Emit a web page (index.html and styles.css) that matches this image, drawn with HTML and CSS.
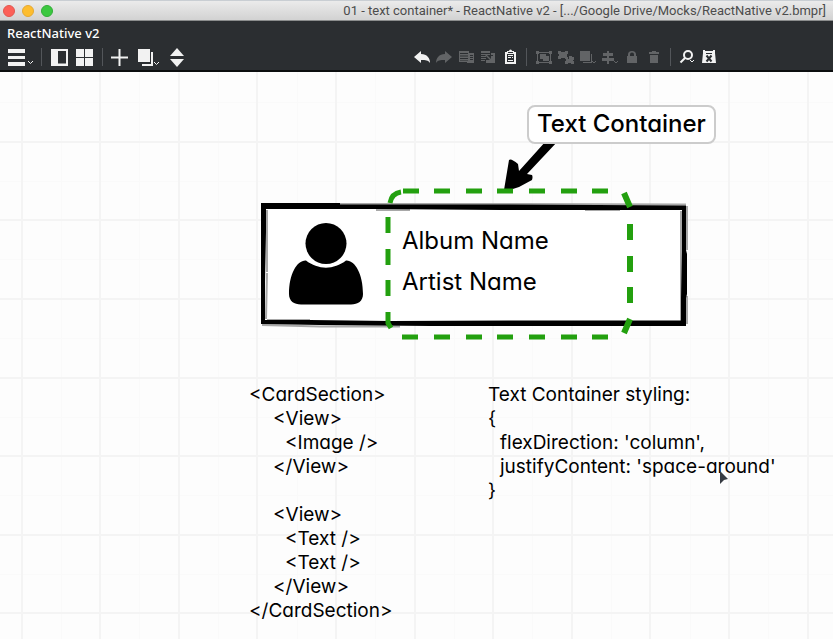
FILE: index.html
```html
<!DOCTYPE html>
<html lang="en">
<head>
<meta charset="utf-8">
<title>01 - text container* - ReactNative v2</title>
<link rel="stylesheet" href="styles.css">
</head>
<body>
<div class="window">
  <header class="titlebar">
    <div class="lights">
      <button class="light close" aria-label="Close"></button>
      <button class="light minimise" aria-label="Minimise"></button>
      <button class="light expand" aria-label="Full screen"></button>
    </div>
    <div class="title">01 - text container* - ReactNative v2 - [.../Google Drive/Mocks/ReactNative v2.bmpr]</div>
  </header>

  <div class="appbar">
    <h1 class="project">ReactNative v2</h1>
    <div class="toolbar">
      <div class="tools start">
        <button class="tool large" aria-label="Menu"><svg width="30" height="20"><path d="M2 1h17v4H2zM2 8h17v3H2zM2 14h17v4H2z"/><path class="line" d="M22 13l2.5 2.5 2.5-2.5"/></svg></button>
        <span class="rule"></span>
        <button class="tool medium" aria-label="Toggle navigator"><svg width="25" height="20"><path fill-rule="evenodd" d="M4 1h17v17H4zM11 3v12.500h8V3z"/></svg></button>
        <button class="tool medium" aria-label="Show all mockups"><svg width="25" height="20"><path d="M4 1h8v8H4zM13 1h8v8h-8zM4 10h8v8H4zM13 10h8v8h-8z"/></svg></button>
        <span class="rule"></span>
        <button class="tool medium" aria-label="New mockup"><svg width="25" height="20"><path d="M3 8.500h7.500V1h2v7.500H20v2h-7.500V18h-2v-7.500H3z"/></svg></button>
        <button class="tool large" aria-label="Duplicate"><svg width="30" height="20"><path d="M5 1h12v13H5zM18 4h2v14H9v-2h9z"/><path class="line" d="M21 14l2.500 2.500 2.500-2.500"/></svg></button>
        <button class="tool large" aria-label="Previous or next"><svg width="30" height="20"><path d="M14 0l7 8H7zM7 11h14l-7 8z"/></svg></button>
      </div>
      <div class="tools edit">
        <button class="tool" aria-label="Undo"><svg width="22" height="20"><path d="M3 9l7-6v3c6 0 9 4 9 9-2-3-4-3-9-3v3z"/></svg></button>
        <button class="tool" aria-label="Redo" disabled><svg width="22" height="20"><path d="M19 9l-7-6v3c-6 0-9 4-9 9 2-3 4-3 9-3v3z"/></svg></button>
        <button class="tool" aria-label="Copy" disabled><svg width="22" height="20"><path fill-rule="evenodd" d="M4 3h10v11H4zM5 5v1h8V5zM5 7.500v1h8v-1zM5 10v1h8v-1zM5 12.500v.5h8v-.5zM14 5h5v10h-7v-1h2zM15 7v1h3V7zM15 9v1h3V9zM15 11v1h3v-1z"/></svg></button>
        <button class="tool" aria-label="Duplicate selection" disabled><svg width="22" height="20"><path d="M4 3h9v2H4zM4 6h9v1H4zM4 8h5v1H4zM4 10h5v1H4zM4 12h4v1H4zM14 5h4v10H9v-2h7V7h-2z"/><path d="M9 6l5 5V8h2v6H9v-2h4L8 7z"/></svg></button>
        <button class="tool" aria-label="Paste"><svg width="22" height="20"><path fill-rule="evenodd" d="M6 4h2V3h2a1.500 1.500 0 0 1 3 0h2v1h2v12H6zM8 6v8h7V6zM9 4v1h5V4z"/><path d="M9 7h5v1H9zM9 9h3v1H9zM9 12h5v1H9zM13 9h1v1h-1z"/></svg></button>
        <span class="rule"></span>
        <button class="tool" aria-label="Group" disabled><svg width="22" height="20"><path class="line" d="M4.500 4.500h13v10h-13z"/><path d="M3 3h3v3H3zM16 3h3v3h-3zM3 13h3v3H3zM16 13h3v3h-3zM7 6h6v2h3v5h-6v-2H7z"/></svg></button>
        <button class="tool" aria-label="Ungroup" disabled><svg width="22" height="20"><path d="M3 3h3v1h4V3h3v3h-1v3h1v2h-3v-1H6v1H3V8h1V6H3zM11 11h3V8h3v1h2v3h-1v1h1v3h-3v-1h-3v1h-3v-3h1z"/></svg></button>
        <button class="tool" aria-label="Arrange" disabled><svg width="22" height="20"><path d="M3 3h10v10H3zM14 6h1v9H6v-1h8z"/><path class="line" d="M15 13l2 2 2-2"/></svg></button>
        <button class="tool" aria-label="Align" disabled><svg width="22" height="20"><path d="M8 3h2v2h4v3h-4v2h5v3h-5v3H8v-3H3v-3h5V8H4V5h4z"/><path class="line" d="M15 13l2 2 2-2"/></svg></button>
        <button class="tool" aria-label="Lock" disabled><svg width="22" height="20"><path fill-rule="evenodd" d="M7 8V6.500a4 3.500 0 0 1 8 0V8h1v7H6V8zM9 8h4V6.500a2 2 0 0 0-4 0z"/></svg></button>
        <button class="tool" aria-label="Delete" disabled><svg width="22" height="20"><path d="M6 4h3V3h4v1h3v2H6zM7 7h8v8H7z"/></svg></button>
        <span class="rule"></span>
        <button class="tool" aria-label="Zoom"><svg width="22" height="20"><circle class="thick" cx="11" cy="7" r="4"/><path class="thick" d="M8 10l-4.500 4.500"/><path class="line" d="M13 12l2 2 2-2"/></svg></button>
        <button class="tool" aria-label="Hide markup"><svg width="22" height="20"><path fill-rule="evenodd" d="M4 2h2v1h8V2h2v3l1 10H3L4 5zM7 5v1h6V5z"/><path class="cut" d="M7.500 7.500l5 6M12.500 7.500l-5 6"/></svg></button>
      </div>
    </div>
  </div>

  <main class="canvas">
    <svg class="drawing" width="1440" height="900" aria-hidden="true">
      <path class="grid minor" d="M61.500 0V900M139.500 0V900M218.500 0V900M297.500 0V900M375.500 0V900M454.500 0V900M532.500 0V900M611.500 0V900M690.500 0V900M768.500 0V900M0 30.500H1440M0 109.500H1440M0 187.500H1440M0 266.500H1440M0 345.500H1440M0 423.500H1440M0 502.500H1440"/>
      <path class="grid" d="M22 0V900M100 0V900M179 0V900M257 0V900M336 0V900M415 0V900M493 0V900M572 0V900M650 0V900M729 0V900M808 0V900M0 70H1440M0 148H1440M0 227H1440M0 306H1440M0 384H1440M0 463H1440M0 541H1440"/>

      <path class="card" d="M264 134H683V251H264z"/>
      <path class="smudge" d="M340 132H520L686 132.500M267 138V200M267 201L266 247M267 248H310M376 138H410M585 138H620M681 139V250M687 134V178M687 224V252M262 204V235M262 253L320 254.500H400"/>
      <path class="edge" d="M261 131H340V132.500H500L686 133.500V178L687 182V222L686 226V254H430L320 253 261 252zM266 137V160L265 210V248H310L390 249 520 248.500H681V226L682 180V138H500L380 137z"/>

      <circle cx="326" cy="171.500" r="20.500"/>
      <path d="M306 188.500C297 188 289 202 289 222C289 229 294 232.500 301 232.500H351C358 232.500 363 229 363 222C363 202 355 188 346 188.500C334 198 318 198 306 188.500z"/>

      <path d="M504 118L509 88Q511 86 518 92L519 99L546 69H558L527 102L532 103Q533 105 532 108L519 115Q508 119 504 118z"/>
      <path class="dash" d="M403 119h16M434 119h16M466 119h16M497 119h16M529 119h16M561 119h16M592 119h16M402 265h16M434 265h16M466 265h16M497 265h16M529 265h16M561 265h16M592 265h16M388 145v16M388 177v16M388 208v16M388 240v11l3 5M390 131C391 125 394 121 401 120"/>
      <path class="dash wide" d="M630 152v16M630 184v16M630 215v16M624 121l6 14M630 247l-6 14"/>
    </svg>

    <p class="callout">Text Container</p>
    <div class="names">
      <p>Album Name</p>
      <p>Artist Name</p>
    </div>
    <pre class="code markup">&lt;CardSection&gt;
<span class="in2">&lt;View&gt;</span>
<span class="in3">&lt;Image /&gt;</span>
<span class="in2">&lt;/View&gt;</span>

<span class="in2">&lt;View&gt;</span>
<span class="in3">&lt;Text /&gt;</span>
<span class="in3">&lt;Text /&gt;</span>
<span class="in2">&lt;/View&gt;</span>
&lt;/CardSection&gt;</pre>
    <pre class="code rules">Text Container styling:
{
<span class="in1">flexDirection: 'column',</span>
<span class="in1">justifyContent: 'space-around'</span>
}</pre>
    <svg class="pointer" width="10" height="14" aria-hidden="true"><path d="M1 0l8 8-4 1-4 4z"/></svg>
  </main>
</div>
</body>
</html>
```
FILE: styles.css
```css
* { box-sizing: border-box; }
body, h1, p, pre { margin: 0; }

.window {
  display: flex;
  flex-direction: column;
  height: 100vh;
  overflow: hidden;
}

.titlebar {
  display: flex;
  align-items: center;
  justify-content: space-between;
  height: 21px;
  padding: 0 7px 0 3px;
  border-top: 1px solid #c9ced3;
  border-bottom: 1px solid #8b8d8d;
  background: linear-gradient(#ebebeb, #d2d2d2);
}
.lights { display: flex; gap: 7px; }
.light {
  width: 12px;
  height: 12px;
  padding: 0;
  border: 1px solid #e2574f;
  border-radius: 50%;
  background: #fc6058;
}
.minimise { border-color: #e5a933; background: #fdbd2f; }
.expand { border-color: #32ad38; background: #3cc840; }
.title {
  font: 13px/18px Roboto, sans-serif;
  color: #4c4c4c;
  white-space: nowrap;
}

.appbar {
  flex: none;
  height: 51px;
  padding-top: 4px;
  border-bottom: 2px solid #0c0e0f;
  background: #2b2e31;
}
.project {
  padding-left: 7px;
  font: 500 13px/17px "Noto Sans", sans-serif;
  color: #fff;
}
.toolbar {
  display: grid;
  grid-template-columns: 411fr 422fr;
  padding-top: 6px;
}
.tools { display: flex; height: 20px; }
.start { padding-left: 6px; }
.tool {
  flex: none;
  width: 22px;
  height: 20px;
  padding: 0;
  border: 0;
  background: none;
  color: #f2f2f2;
}
.medium { width: 25px; }
.large { width: 30px; }
.tool:disabled { color: #626466; }
.tool svg { display: block; fill: currentColor; }
.tool .line { fill: none; stroke: currentColor; stroke-width: 1; }
.tool .thick { fill: none; stroke: currentColor; stroke-width: 2; }
.tool .cut { fill: none; stroke: #2b2e31; stroke-width: 2; }
.rule {
  width: 1px;
  height: 18px;
  margin: 0 5px;
  background: #53565a;
}
.edit .rule { margin-right: 6px; }

.canvas {
  position: relative;
  flex: 1;
  overflow: hidden;
  background: #fdfdfd;
  font-family: Inter, sans-serif;
  font-feature-settings: "cv11";
  color: #000;
}
.drawing { position: absolute; top: 0; left: 0; }
.grid { fill: none; stroke: #f4f4f4; stroke-width: 2; }
.minor { stroke: #fafafa; stroke-width: 1; }
.card { fill: #fff; }
.edge { fill: #000; fill-rule: evenodd; }
.smudge { fill: none; stroke: #a8a8a8; stroke-width: 2; }
.dash { fill: none; stroke: #23a00f; stroke-width: 5; }
.wide { stroke-width: 6; }

.callout {
  position: absolute;
  top: 33px;
  left: 527px;
  padding: 0 8px 2px;
  border: 2px solid #ccc;
  border-radius: 8px;
  background: #fff;
  font-size: 24px;
  font-weight: 500;
  line-height: 33px;
}
.names {
  position: absolute;
  top: 148px;
  left: 402px;
  font-size: 24px;
  line-height: 41px;
}
.code {
  position: absolute;
  top: 311px;
  font: inherit;
  font-size: 19px;
  line-height: 24px;
}
.markup { left: 249px; }
.rules { left: 488px; }
.in1 { padding-left: 12px; }
.in2 { padding-left: 24px; }
.in3 { padding-left: 36px; }
.pointer { position: absolute; top: 399px; left: 719px; fill: #363b42; }
```
